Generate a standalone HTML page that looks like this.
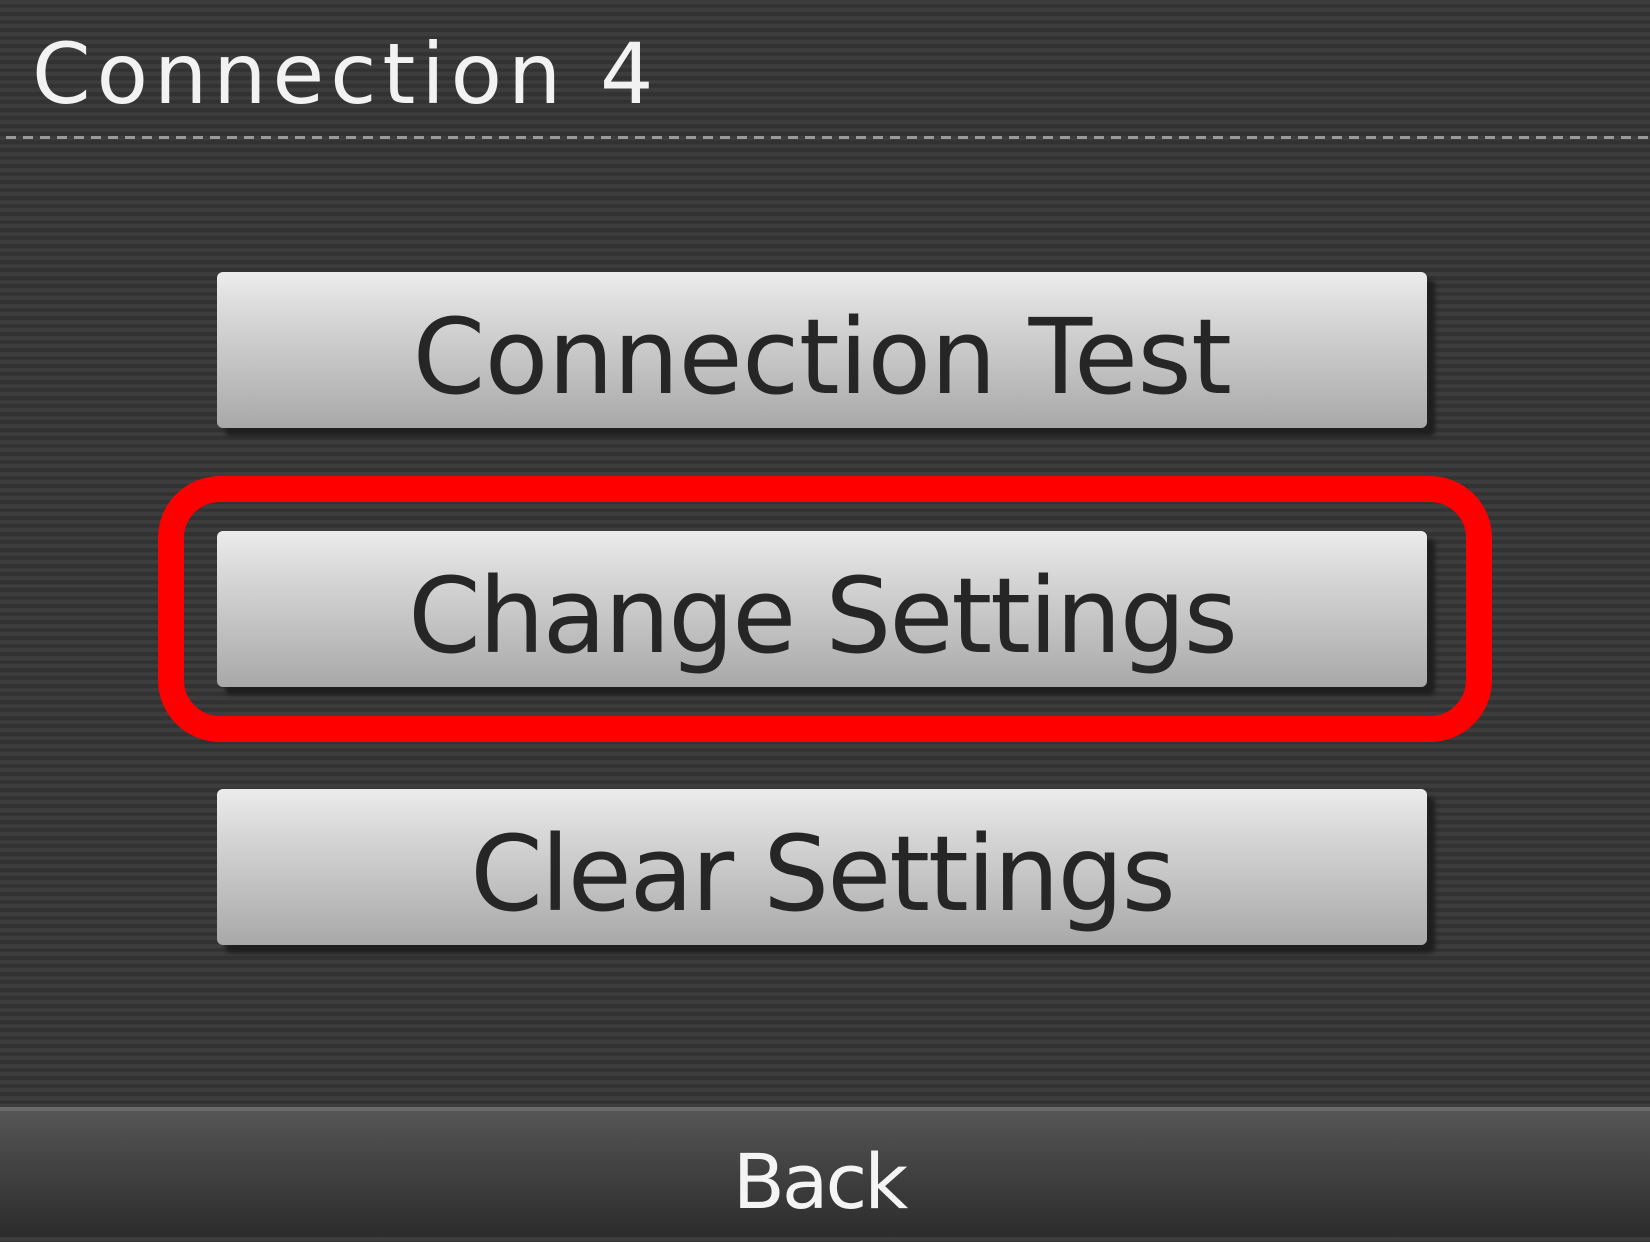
<!DOCTYPE html>
<html><head><meta charset="utf-8"><style>
html,body{margin:0;padding:0}
body{width:1650px;height:1237px;position:relative;overflow:hidden;
background:repeating-linear-gradient(180deg,#3d3d3d 0,#3d3d3d 4px,#323232 4px,#323232 8px);
font-family:"DejaVu Sans","Liberation Sans",sans-serif}
.title{position:absolute;left:32px;top:24px;color:#f2f2f2;font-size:84px;letter-spacing:6px;line-height:100px;font-family:"DejaVu Sans",sans-serif}
.dash{position:absolute;left:6px;right:0;top:136px;height:3px;
background:repeating-linear-gradient(90deg,#9a9a9a 0,#9a9a9a 10px,transparent 10px,transparent 17px)}
.btn{position:absolute;left:217px;width:1210px;height:156px;border-radius:6px;
background:linear-gradient(180deg,#ececec 0,#d6d6d6 30%,#b9b9b9 75%,#a8a8a8 100%);
box-shadow:8px 8px 4px #1f1f1f;color:#262626;text-align:center;font-size:104px;line-height:170px;letter-spacing:-2px}
.red{position:absolute;left:158px;top:476px;width:1282px;height:214px;border:26px solid #ff0000;border-radius:62px}
.bar{position:absolute;left:0;right:0;top:1107px;bottom:0;border-top:4px solid #6a6a6a;
background:linear-gradient(180deg,#555 0,#444 40%,#2c2c2c 100%)}
.back{position:absolute;left:0;right:0;top:1122px;text-align:center;color:#f4f4f4;font-size:76px;line-height:120px;letter-spacing:-3px;padding-right:12px}
</style></head><body>
<div class="title">Connection 4</div>
<div class="dash"></div>
<div class="btn" style="top:272px;letter-spacing:-0.5px">Connection Test</div>
<div class="btn" style="top:531px">Change Settings</div>
<div class="btn" style="top:789px">Clear Settings</div>
<div class="red"></div>
<div class="bar"></div>
<div class="back">Back</div>
</body></html>
